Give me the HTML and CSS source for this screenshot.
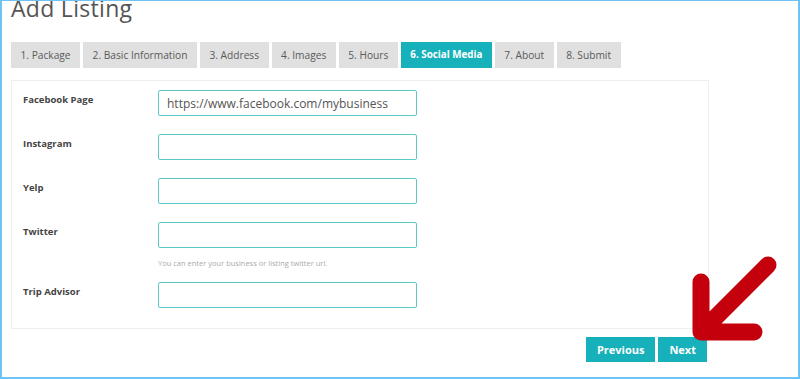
FILE: index.html
```html
<!DOCTYPE html>
<html lang="en">
<head>
  <meta charset="UTF-8" />
  <title>Add Listing</title>
  <link rel="stylesheet" href="styles.css">
</head>
<body>

<div class="frame">
  <h1 class="title">Add Listing</h1>

  <div class="tabs">
    <div class="tab">1. Package</div>
    <div class="tab">2. Basic Information</div>
    <div class="tab">3. Address</div>
    <div class="tab">4. Images</div>
    <div class="tab">5. Hours</div>
    <div class="tab active">6. Social Media</div>
    <div class="tab">7. About</div>
    <div class="tab">8. Submit</div>
  </div>

  <div class="panel">
    <div class="field">
      <label>Facebook Page</label>
      <div class="control"><input type="text" value="https://www.facebook.com/mybusiness"></div>
    </div>
    <div class="field">
      <label>Instagram</label>
      <div class="control"><input type="text"></div>
    </div>
    <div class="field">
      <label>Yelp</label>
      <div class="control"><input type="text"></div>
    </div>
    <div class="field">
      <label>Twitter</label>
      <div class="control">
        <input type="text">
        <div class="help">You can enter your business or listing twitter url.</div>
      </div>
    </div>
    <div class="field last">
      <label>Trip Advisor</label>
      <div class="control"><input type="text"></div>
    </div>
  </div>

  <div class="actions">
    <button class="btn">Previous</button>
    <button class="btn">Next</button>
  </div>

  <svg class="arrow" width="100" height="100" viewBox="0 0 100 100">
    <path d="M82 10 L15 77 M15 27 L15 77 L68 77" fill="none" stroke="#c4000c" stroke-width="17" stroke-linecap="round" stroke-linejoin="round"/>
  </svg>
</div>

</body>
</html>
```

FILE: styles.css
```css
* { box-sizing: border-box; }
html, body {
  margin: 0;
  padding: 0;
  background: #ffffff;
  font-family: "Open Sans", sans-serif;
  overflow: hidden;
}

.frame {
  position: relative;
  width: 800px;
  height: 379px;
  border: 2px solid #6ec3f2;
  border-top-width: 1px;
  padding: 0 0 0 9px;
  overflow: hidden;
}

.title {
  margin: -6px 0 0 0;
  font-size: 23px;
  font-weight: 400;
  color: #555;
  line-height: 26px;
  letter-spacing: 0.3px;
}

.tabs {
  display: flex;
  gap: 3px;
  margin-top: 21px;
}

.tab {
  height: 26px;
  line-height: 26px;
  padding: 0 9.5px;
  background: #e0e0e0;
  color: #5a5a5a;
  font-size: 10.2px;
}

.tab.active {
  background: #17b1bb;
  color: #fff;
  font-weight: 700;
  font-size: 9.8px;
}

.panel {
  width: 698px;
  margin-top: 12px;
  border: 1px solid #eeeeee;
  padding: 9px 0 20px 11px;
}

.field {
  display: flex;
  margin-bottom: 18px;
}
.field.last { margin-bottom: 0; }

.field label {
  width: 135px;
  padding-top: 3px;
  font-size: 9.5px;
  font-weight: 700;
  color: #444;
}

.control input {
  display: block;
  width: 259px;
  height: 26px;
  border: 1px solid #5cc9c9;
  border-radius: 2px;
  padding: 0 8px;
  font-family: "Open Sans", sans-serif;
  font-size: 12px;
  color: #555;
  outline: none;
}

.help {
  margin-top: 10px;
  margin-bottom: -4px;
  font-size: 7.5px;
  color: #aaa;
}

.actions {
  display: flex;
  justify-content: flex-end;
  gap: 3px;
  width: 698px;
  margin-top: 8px;
  padding-right: 2px;
}

.btn {
  height: 25px;
  padding: 0 11px;
  border: none;
  background: #17b1bb;
  color: #fff;
  font-family: "Open Sans", sans-serif;
  font-size: 11px;
  font-weight: 700;
}

.arrow {
  position: absolute;
  left: 684px;
  top: 254px;
}
```
